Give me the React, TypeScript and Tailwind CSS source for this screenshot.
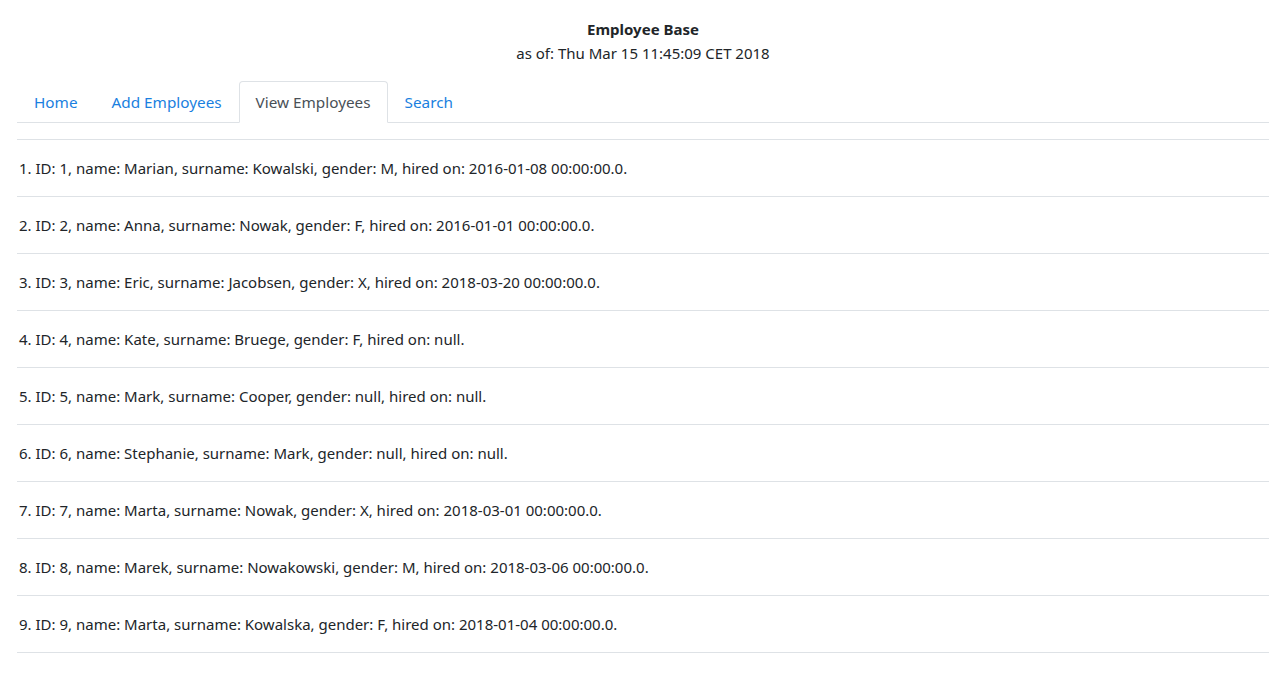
import { useState } from 'react';

const employees = [
  { id: 1, name: 'Marian', surname: 'Kowalski', gender: 'M', hired: '2016-01-08 00:00:00.0' },
  { id: 2, name: 'Anna', surname: 'Nowak', gender: 'F', hired: '2016-01-01 00:00:00.0' },
  { id: 3, name: 'Eric', surname: 'Jacobsen', gender: 'X', hired: '2018-03-20 00:00:00.0' },
  { id: 4, name: 'Kate', surname: 'Bruege', gender: 'F', hired: 'null' },
  { id: 5, name: 'Mark', surname: 'Cooper', gender: 'null', hired: 'null' },
  { id: 6, name: 'Stephanie', surname: 'Mark', gender: 'null', hired: 'null' },
  { id: 7, name: 'Marta', surname: 'Nowak', gender: 'X', hired: '2018-03-01 00:00:00.0' },
  { id: 8, name: 'Marek', surname: 'Nowakowski', gender: 'M', hired: '2018-03-06 00:00:00.0' },
  { id: 9, name: 'Marta', surname: 'Kowalska', gender: 'F', hired: '2018-01-04 00:00:00.0' },
];

const tabs = ['Home', 'Add Employees', 'View Employees', 'Search'];

export default function App() {
  const [active, setActive] = useState('View Employees');

  return (
    <div className="min-h-screen bg-white px-[17px] pt-[17px] text-[15px] leading-6 text-[#212529] font-['Noto_Sans',sans-serif]">
      {/* Header */}
      <div className="text-center">
        <div className="font-bold">Employee Base</div>
        <div>as of: Thu Mar 15 11:45:09 CET 2018</div>
      </div>

      {/* Tabs */}
      <ul className="mt-4 flex border-b border-[#dee2e6] text-[15.3px]">
        {tabs.map((tab) => (
          <li key={tab} className="-mb-px">
            <button
              onClick={() => setActive(tab)}
              className={
                tab === active
                  ? 'block rounded-t border border-[#dee2e6] border-b-white bg-white px-4 py-2 text-[#495057]'
                  : 'block rounded-t border border-transparent px-4 py-2 text-[#1a7fe0]'
              }
            >
              {tab}
            </button>
          </li>
        ))}
      </ul>

      {/* Employee list */}
      <div className="mt-4 border-t border-[#dee2e6]">
        {employees.map((e, i) => (
          <div key={e.id} className="border-b border-[#dee2e6] py-4 pl-0.5">
            {i + 1}. ID: {e.id}, name: {e.name}, surname: {e.surname}, gender: {e.gender}, hired on: {e.hired}.
          </div>
        ))}
      </div>
    </div>
  );
}
